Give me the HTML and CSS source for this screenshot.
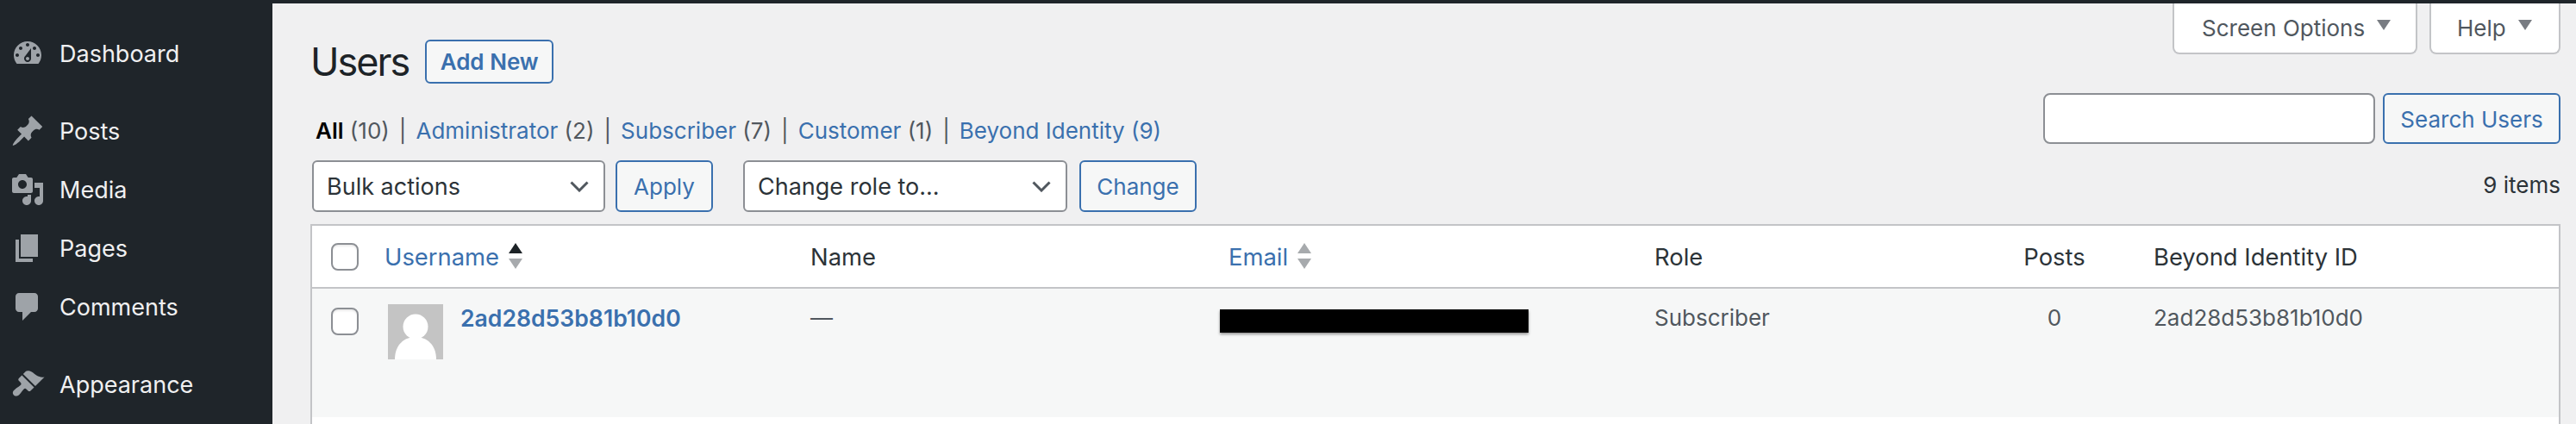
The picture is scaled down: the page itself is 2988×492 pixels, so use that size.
FILE: index.html
```html
<!DOCTYPE html>
<html lang="en">
<head>
<meta charset="utf-8">
<title>Users</title>
<link rel="stylesheet" href="styles.css">
</head>
<body>
<div class="page">
  <nav class="sidebar">
    <ul class="menu">
      <li class="menu-item"><svg class="menu-icon" viewBox="0 0 20 20"><path d="M3.76 16h12.48c1.1-1.37 1.76-3.11 1.76-5 0-4.42-3.58-8-8-8s-8 3.58-8 8c0 1.89.66 3.63 1.76 5zM10 4c.55 0 1 .45 1 1s-.45 1-1 1-1-.45-1-1 .45-1 1-1zM6 6c.55 0 1 .45 1 1s-.45 1-1 1-1-.45-1-1 .45-1 1-1zm8 0c.55 0 1 .45 1 1s-.45 1-1 1-1-.45-1-1 .45-1 1-1zm-5.37 5.55L12 7v6c0 1.1-.9 2-2 2s-2-.9-2-2c0-.57.24-1.08.63-1.45zM4 10c.55 0 1 .45 1 1s-.45 1-1 1-1-.45-1-1 .45-1 1-1zm12 0c.55 0 1 .45 1 1s-.45 1-1 1-1-.45-1-1 .45-1 1-1zm-5 3c0-.55-.45-1-1-1s-1 .45-1 1 .45 1 1 1 1-.45 1-1z" fill-rule="evenodd"/></svg><span>Dashboard</span></li>
      <li class="menu-item menu-gap"><svg class="menu-icon" viewBox="0 0 20 20"><path d="M10.44 3.02l1.82-1.82 6.36 6.35-1.83 1.82c-1.05-.68-2.48-.57-3.41.36l-.75.75c-.92.93-1.04 2.35-.35 3.41l-1.83 1.82-2.41-2.41-2.8 2.79c-.42.42-3.38 2.71-3.8 2.29s1.86-3.39 2.28-3.81l2.79-2.79L4.1 9.36l1.83-1.82c1.05.69 2.48.57 3.4-.36l.75-.75c.93-.92 1.05-2.35.36-3.41z"/></svg><span>Posts</span></li>
      <li class="menu-item"><svg class="menu-icon" viewBox="0 0 20 20"><path d="M13 11V4c0-.55-.45-1-1-1h-1.67L9 1H5L3.67 3H2c-.55 0-1 .45-1 1v7c0 .55.45 1 1 1h10c.55 0 1-.45 1-1zM7 4.5c1.38 0 2.5 1.12 2.5 2.5S8.38 9.5 7 9.5 4.5 8.38 4.5 7 5.62 4.5 7 4.5zM14 6h5v10.5c0 1.38-1.12 2.5-2.5 2.5S14 17.88 14 16.5s1.12-2.5 2.5-2.5c.17 0 .34.02.5.05V9h-3V6zm-4 8.05V13h2v3.5c0 1.38-1.12 2.5-2.5 2.5S7 17.88 7 16.5 8.12 14 9.5 14c.17 0 .34.02.5.05z" fill-rule="evenodd"/></svg><span>Media</span></li>
      <li class="menu-item"><svg class="menu-icon" viewBox="0 0 20 20"><path d="M6 15V2h10v13H6zm-1 1h8v2H3V5h2v11z"/></svg><span>Pages</span></li>
      <li class="menu-item"><svg class="menu-icon" viewBox="0 0 20 20"><path d="M5 2h9c1.1 0 2 .9 2 2v7c0 1.1-.9 2-2 2h-2l-5 5v-5H5c-1.1 0-2-.9-2-2V4c0-1.1.9-2 2-2z"/></svg><span>Comments</span></li>
      <li class="menu-item menu-gap"><svg class="menu-icon" viewBox="0 0 20 20"><path d="M14.48 11.06L7.41 3.99l1.5-1.5c.5-.56 2.3-.47 3.51.32 1.21.8 1.43 1.28 2.91 2.1 1.18.64 2.45 1.26 4.45.85zm-.71.71L6.7 4.7 4.93 6.47c-.39.39-.39 1.02 0 1.41l1.06 1.06c.39.39.39 1.03 0 1.42-.6.6-1.43 1.11-2.21 1.69-.35.26-.7.53-1.01.84C1.43 13.71.96 15.18 2 16.2c1.05 1.05 2.53.54 3.29-.29.31-.32.59-.66.84-1.01.58-.78 1.09-1.61 1.69-2.21.39-.39 1.03-.39 1.42 0l1.06 1.06c.39.39 1.02.39 1.41 0z"/></svg><span>Appearance</span></li>
    </ul>
  </nav>
  <main class="content">
    <div class="top">
      <div class="top-left">
        <div class="title-row">
          <h1 class="title">Users</h1>
          <a class="btn btn-add">Add New</a>
        </div>
        <ul class="views">
          <li><a class="current">All</a> <span class="count">(10)</span><span class="sep">|</span></li>
          <li><a>Administrator</a> <span class="count">(2)</span><span class="sep">|</span></li>
          <li><a>Subscriber</a> <span class="count">(7)</span><span class="sep">|</span></li>
          <li><a>Customer</a> <span class="count">(1)</span><span class="sep">|</span></li>
          <li><a>Beyond Identity</a> <a>(9)</a></li>
        </ul>
        <div class="actions">
          <select class="select select-bulk"><option>Bulk actions</option></select>
          <button class="btn btn-apply">Apply</button>
          <select class="select select-role"><option>Change role to...</option></select>
          <button class="btn btn-change">Change</button>
        </div>
      </div>
      <div class="top-right">
        <div class="tabs">
          <div class="tab tab-options">Screen Options<svg class="tab-arrow" viewBox="0 0 16 12"><path d="M0 0h16L8 12z"/></svg></div>
          <div class="tab tab-help">Help<svg class="tab-arrow" viewBox="0 0 16 12"><path d="M0 0h16L8 12z"/></svg></div>
        </div>
        <div class="search">
          <input class="search-input" type="search">
          <button class="btn btn-search">Search Users</button>
        </div>
        <div class="items">9 items</div>
      </div>
    </div>
    <div class="table-box">
      <table class="users">
        <colgroup>
          <col class="col-check"><col class="col-user"><col class="col-name"><col class="col-email"><col class="col-role"><col class="col-posts"><col class="col-id">
        </colgroup>
        <thead>
          <tr>
            <th class="check"><input class="checkbox" type="checkbox"></th>
            <th><a class="sort">Username<svg class="sort-icon" viewBox="0 0 16 30"><path class="asc" d="M8 0l8 12H0z"/><path class="off" d="M0 18h16L8 30z"/></svg></a></th>
            <th>Name</th>
            <th><a class="sort">Email<svg class="sort-icon" viewBox="0 0 16 30"><path class="off" d="M8 0l8 12H0z"/><path class="off" d="M0 18h16L8 30z"/></svg></a></th>
            <th>Role</th>
            <th class="num">Posts</th>
            <th>Beyond Identity ID</th>
          </tr>
        </thead>
        <tbody>
          <tr>
            <td class="check"><input class="checkbox" type="checkbox"></td>
            <td>
              <div class="user">
                <svg class="avatar" viewBox="0 0 64 64"><rect width="64" height="64" fill="#c4c4c4"/><circle cx="32" cy="26" r="14.5" fill="#fff"/><path d="M8 64C8 47 19 38 32 38s24 9 24 26z" fill="#fff"/></svg>
                <a class="username">2ad28d53b81b10d0</a>
              </div>
            </td>
            <td>—</td>
            <td><div class="redacted"></div></td>
            <td>Subscriber</td>
            <td class="num">0</td>
            <td>2ad28d53b81b10d0</td>
          </tr>
        </tbody>
      </table>
    </div>
  </main>
</div>
</body>
</html>
```
FILE: styles.css
```css
* { box-sizing: border-box; }
html, body { margin: 0; height: 100%; overflow: hidden; }
body {
  background: #f0f0f1;
  color: #2c3338;
  font-family: Inter, "Liberation Sans", sans-serif;
  font-size: 26px;
}
a { color: #3a70ae; text-decoration: none; }
ul { list-style: none; margin: 0; padding: 0; }

.page { display: flex; height: 492px; border-top: 4px solid #1f252a; overflow: hidden; }

.sidebar { width: 316px; flex: none; background: #1f252a; margin-top: -4px; padding-top: 28px; }
.menu-item { display: flex; align-items: center; height: 68px; padding-left: 12px; color: #f0f0f1; font-size: 27px; }
.menu-gap { margin-top: 22px; }
.menu-icon { width: 40px; height: 40px; margin-right: 17px; fill: #9ea3a8; flex: none; }

.content { flex: 1; min-width: 0; padding: 0 18px 0 44px; }
.top { display: flex; justify-content: space-between; }
.top-left { padding-top: 42px; margin-left: 2px; }
.top-right { display: flex; flex-direction: column; align-items: flex-end; }

.title-row { display: flex; align-items: center; gap: 19px; height: 51px; }
.title { margin: 0 0 0 -2px; font-size: 45px; font-weight: 400; color: #1d2327; line-height: 51px; letter-spacing: -2px; }

.btn {
  display: inline-flex; align-items: center; justify-content: center;
  height: 60px; border: 2px solid #3a70ae; border-radius: 6px;
  background: #f6f7f7; color: #3a70ae;
  font: inherit; padding: 0;
}
.btn-add { width: 149px; height: 51px; font-weight: 600; font-size: 26px; }
.btn-apply { width: 113px; }
.btn-change { width: 136px; }
.btn-search { width: 206px; padding-top: 2px; }

.views { display: flex; height: 69px; margin-top: 2px; padding-left: 4px; align-items: flex-end; line-height: 32px; font-size: 26px; white-space: pre; color: #50575e; }
.views .current { color: #000; font-weight: 600; }
.sep { margin: 0 11px; color: #50575e; }

.actions { display: flex; margin-top: -2px; padding-top: 20px; height: 80px; }
.select {
  appearance: none; height: 60px; border: 2px solid #8c8f94; border-radius: 6px;
  background: #fff url("data:image/svg+xml,%3Csvg xmlns='http://www.w3.org/2000/svg' width='22' height='13' viewBox='0 0 22 13'%3E%3Cpath d='M1.5 1.5L11 11l9.5-9.5' fill='none' stroke='%2350575e' stroke-width='3'/%3E%3C/svg%3E") no-repeat right 17px center;
  color: #2c3338; font: inherit; font-size: 27px; padding: 0 0 0 15px;
}
.select-bulk { width: 340px; margin-right: 12px; }
.select-role { width: 376px; margin-left: 35px; margin-right: 14px; }

.tabs { display: flex; gap: 14px; }
.tab {
  display: flex; align-items: center; height: 59px; background: #fff;
  border: 2px solid #c3c4c7; border-top: 0; border-radius: 0 0 8px 8px;
  color: #50575e; font-size: 26px;
}
.tab-options { width: 284px; padding-left: 32px; }
.tab-help { width: 152px; padding-left: 30px; }
.tab-arrow { width: 16px; height: 12px; margin-left: 14px; margin-top: -8px; fill: #787c82; }

.search { display: flex; gap: 9px; margin-top: 45px; }
.search-input { width: 385px; height: 59px; appearance: none; border: 2px solid #8c8f94; border-radius: 8px; background: #fff; }
.search .btn { height: 59px; }
.items { margin-top: 32px; line-height: 32px; color: #2c3338; }

.table-box { margin-top: 14px; height: 240px; border: 2px solid #c3c4c7; background: #fff; }
.users { width: 100%; table-layout: fixed; border-collapse: collapse; }
.col-check { width: 68px; }
.col-user { width: 494px; }
.col-name { width: 485px; }
.col-email { width: 494px; }
.col-role { width: 381px; }
.col-posts { width: 198px; }

.users th, .users td { text-align: left; vertical-align: top; font-weight: 400; line-height: 38px; }
.users th { height: 72px; padding: 17px 16px 0; border-bottom: 2px solid #c3c4c7; color: #2c3338; font-size: 27.4px; }
.users td { height: 150px; padding: 15px 16px 0; background: #f6f7f7; color: #50575e; }
.users .num { text-align: center; }
.users .check { padding: 22px 0 0 22px; }
.users th.check { padding-top: 20px; }

.checkbox {
  appearance: none; display: block; margin: 0; width: 32px; height: 32px;
  background: #fff; border: 2px solid #8c8f94; border-radius: 8px;
  box-shadow: inset 0 2px 2px rgba(0, 0, 0, .08);
}
.sort { display: flex; align-items: center; height: 38px; }
.sort-icon { width: 16px; height: 30px; margin-left: 11px; margin-top: -2px; }
.asc { fill: #1d2327; }
.off { fill: #a7aaad; }

.user { display: flex; padding-left: 4px; }
.avatar { width: 64px; height: 64px; margin: 3px 20px 0 0; flex: none; }
.username { font-weight: 600; font-size: 26.6px; }

.redacted { width: 358px; height: 27px; margin: 9px 0 0 -10px; background: #000; box-shadow: 0 2px 3px rgba(0, 0, 0, .4); }
```
